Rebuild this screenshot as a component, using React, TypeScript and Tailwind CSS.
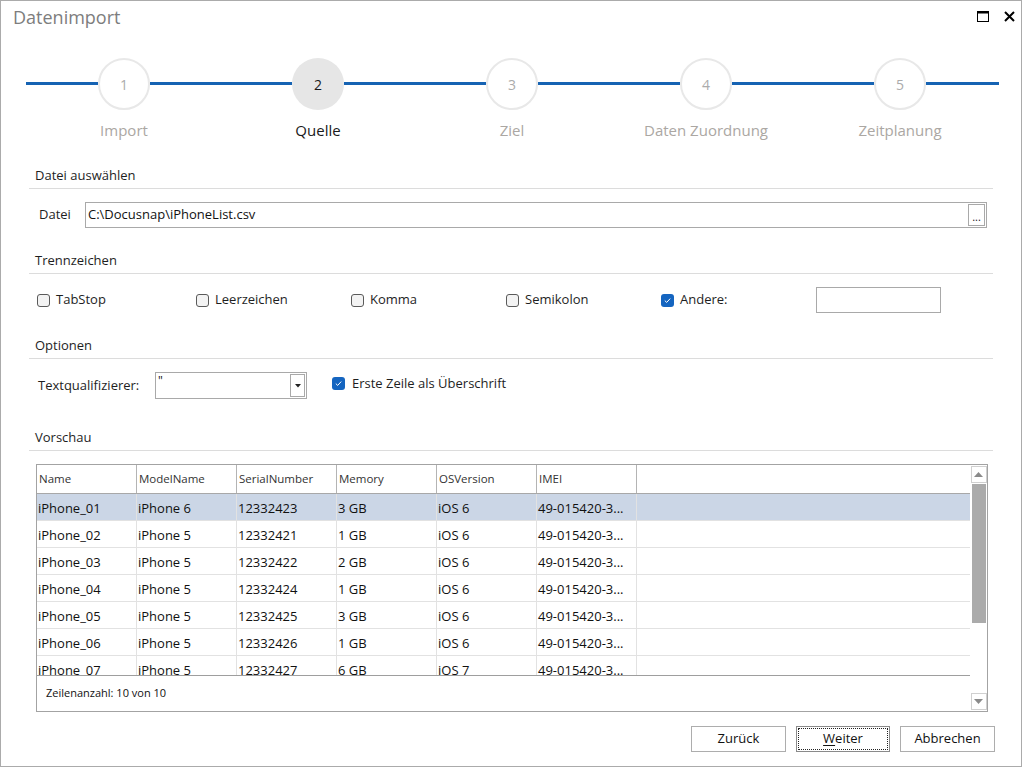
import React from "react";

const STEPS = [
  { n: 1, label: "Import" },
  { n: 2, label: "Quelle", active: true },
  { n: 3, label: "Ziel" },
  { n: 4, label: "Daten Zuordnung" },
  { n: 5, label: "Zeitplanung" },
];

const COLS = ["Name", "ModelName", "SerialNumber", "Memory", "OSVersion", "IMEI"];

const ROWS = [
  ["iPhone_01", "iPhone 6", "12332423", "3 GB", "iOS 6", "49-015420-3..."],
  ["iPhone_02", "iPhone 5", "12332421", "1 GB", "iOS 6", "49-015420-3..."],
  ["iPhone_03", "iPhone 5", "12332422", "2 GB", "iOS 6", "49-015420-3..."],
  ["iPhone_04", "iPhone 5", "12332424", "1 GB", "iOS 6", "49-015420-3..."],
  ["iPhone_05", "iPhone 5", "12332425", "3 GB", "iOS 6", "49-015420-3..."],
  ["iPhone_06", "iPhone 5", "12332426", "1 GB", "iOS 6", "49-015420-3..."],
  ["iPhone_07", "iPhone 5", "12332427", "6 GB", "iOS 7", "49-015420-3..."],
];

function Checkbox({ checked }: { checked?: boolean }) {
  if (checked) {
    return (
      <span className="flex h-[13px] w-[13px] shrink-0 items-center justify-center rounded-[3px] bg-[#1565c0]">
        <svg width="9" height="9" viewBox="0 0 9 9">
          <path d="M1.8 4.6 L3.7 6.4 L7.2 2.6" fill="none" stroke="#ffffff" strokeWidth="1" />
        </svg>
      </span>
    );
  }
  return <span className="h-[13px] w-[13px] shrink-0 rounded-[3px] border border-[#5a5a5a] bg-[#f3f3f3]" />;
}

function SectionHeader({ title }: { title: string }) {
  return (
    <div className="mx-[28px] border-b border-[#dcdcdc] pb-[4px] pl-[6px] text-[13px] leading-[18px] text-[#1e1e1e]">
      {title}
    </div>
  );
}

function Stepper() {
  return (
    <div className="mt-[22px] flex pl-[25px]">
      <div className="mt-[24px] h-[3px] w-[72px] bg-[#1663b3]" />
      {STEPS.map((s, i) => (
        <React.Fragment key={s.n}>
          <div className="flex w-[52px] flex-col items-center">
            <div
              className={
                s.active
                  ? "flex h-[52px] w-[52px] items-center justify-center rounded-full bg-[#e6e6e6] text-[14px] text-[#1a1a1a]"
                  : "flex h-[52px] w-[52px] items-center justify-center rounded-full border-2 border-[#e8e8e8] bg-white text-[14px] text-[#ababab]"
              }
            >
              {s.n}
            </div>
            <div
              className={
                "mt-[10px] whitespace-nowrap text-[15px] leading-[20px] " +
                (s.active ? "text-[#1a1a1a]" : "text-[#aba7a3]")
              }
            >
              {s.label}
            </div>
          </div>
          {i < STEPS.length - 1 ? (
            <div className="mt-[24px] h-[3px] w-[142px] bg-[#1663b3]" />
          ) : (
            <div className="mt-[24px] h-[3px] w-[73px] bg-[#1663b3]" />
          )}
        </React.Fragment>
      ))}
    </div>
  );
}

function Scrollbar() {
  return (
    <div className="flex w-[17px] flex-col items-center pt-[1px] pb-[1px]">
      <div className="flex h-[17px] w-[16px] items-center justify-center border border-[#d0d0d0] bg-white">
        <svg width="9" height="5" viewBox="0 0 9 5">
          <path d="M0 5 L4.5 0 L9 5 Z" fill="#8a8a8a" />
        </svg>
      </div>
      <div className="mt-[1px] h-[139px] w-[14px] bg-[#ababab]" />
      <div className="flex-1" />
      <div className="flex h-[17px] w-[16px] items-center justify-center border border-[#d0d0d0] bg-white">
        <svg width="9" height="5" viewBox="0 0 9 5">
          <path d="M0 0 L4.5 5 L9 0 Z" fill="#8a8a8a" />
        </svg>
      </div>
    </div>
  );
}

function Preview() {
  return (
    <div className="ml-[35px] mr-[33px] mt-[13px] flex h-[248px] border border-[#a3a3a3] bg-white">
      <div className="flex min-w-0 flex-1 flex-col">
        <div className="flex h-[211px] flex-col overflow-hidden border-b border-[#9e9e9e]">
          <div className="flex h-[29px] shrink-0 border-b border-[#a8a8a8]">
            {COLS.map((c) => (
              <div
                key={c}
                className="flex w-[100px] shrink-0 items-center border-r border-[#b4b4b4] pl-[2px] text-[11.5px] text-[#333333]"
              >
                {c}
              </div>
            ))}
          </div>
          {ROWS.map((r, i) => (
            <div
              key={r[0]}
              className={
                "flex h-[27px] shrink-0 border-b border-[#e2e2e2] " + (i === 0 ? "bg-[#cbd6e6]" : "bg-white")
              }
            >
              {r.map((v, j) => (
                <div
                  key={j}
                  className="flex w-[100px] shrink-0 items-center border-r border-[#e2e2e2] pl-[1px] pt-[1px] text-[13px] leading-[18px] text-[#111111]"
                >
                  {v}
                </div>
              ))}
            </div>
          ))}
        </div>
        <div className="flex flex-1 items-center pl-[9px] text-[11px] text-[#111111]">Zeilenanzahl: 10 von 10</div>
      </div>
      <Scrollbar />
    </div>
  );
}

export default function App() {
  const checks = [
    { label: "TabStop", w: "w-[159px]" },
    { label: "Leerzeichen", w: "w-[155px]" },
    { label: "Komma", w: "w-[155px]" },
    { label: "Semikolon", w: "w-[155px]" },
    { label: "Andere:", w: "w-[155px]", checked: true },
  ];

  return (
    <div className="h-[768px] w-[1024px] bg-white font-['Open_Sans',sans-serif]">
      <div className="flex h-[767px] w-[1022px] flex-col border border-[#ababab] bg-white">
        {/* Title bar */}
        <div className="flex h-[35px] shrink-0 items-start">
          <div className="pl-[12px] pt-[3px] text-[18px] leading-[26px] text-[#7d7d7d]">Datenimport</div>
          <div className="flex-1" />
          <div className="flex items-center gap-[15px] pr-[6px] pt-[10px]">
            <svg width="12" height="11" viewBox="0 0 12 11">
              <rect x="0.5" y="0.5" width="11" height="10" fill="none" stroke="#000" strokeWidth="1" />
              <rect x="0" y="0" width="12" height="2.5" fill="#000" />
            </svg>
            <svg width="11" height="11" viewBox="0 0 11 11">
              <path d="M1 1 L10 10 M10 1 L1 10" stroke="#000" strokeWidth="2" />
            </svg>
          </div>
        </div>

        <Stepper />

        {/* Datei auswählen */}
        <div className="mt-[26px]">
          <SectionHeader title="Datei auswählen" />
          <div className="ml-[38px] mr-[34px] mt-[13px] flex items-center">
            <div className="w-[46px] text-[13px] text-[#1e1e1e]">Datei</div>
            <div className="flex h-[26px] flex-1 items-center justify-between border border-[#a9a9a9] pl-[2px] pr-[1px]">
              <span className="text-[13px] text-[#111111]">C:\Docusnap\iPhoneList.csv</span>
              <div className="flex h-[22px] w-[17px] items-end justify-center border border-[#a9a9a9] pb-[3px] text-[11px] leading-[10px] text-[#222222]">
                ...
              </div>
            </div>
          </div>
        </div>

        {/* Trennzeichen */}
        <div className="mt-[23px]">
          <SectionHeader title="Trennzeichen" />
          <div className="ml-[36px] mt-[13px] flex h-[26px] items-center">
            {checks.map((c) => (
              <div key={c.label} className={"flex items-center gap-[6px] " + c.w}>
                <Checkbox checked={c.checked} />
                <span className="text-[13px] text-[#1e1e1e]">{c.label}</span>
              </div>
            ))}
            <div className="h-[26px] w-[125px] border border-[#a9a9a9] bg-white" />
          </div>
        </div>

        {/* Optionen */}
        <div className="mt-[23px]">
          <SectionHeader title="Optionen" />
          <div className="ml-[37px] mt-[13px] flex h-[27px] items-start">
            <div className="mt-[4px] w-[117px] text-[13px] text-[#1e1e1e]">Textqualifizierer:</div>
            <div className="flex h-[27px] w-[152px] items-start justify-between border border-[#a9a9a9] pl-[2px] pr-[1px] pt-[1px]">
              <span className="text-[12px] leading-[14px] text-[#111111]">"</span>
              <div className="flex h-[23px] w-[15px] items-center justify-center border border-[#a9a9a9]">
                <svg width="6" height="4" viewBox="0 0 6 4">
                  <path d="M0 0 L3 3.5 L6 0 Z" fill="#222" />
                </svg>
              </div>
            </div>
            <div className="ml-[25px] mt-[2px] flex items-center gap-[7px]">
              <Checkbox checked />
              <span className="text-[13px] text-[#1e1e1e]">Erste Zeile als Überschrift</span>
            </div>
          </div>
        </div>

        {/* Vorschau */}
        <div className="mt-[29px]">
          <SectionHeader title="Vorschau" />
          <Preview />
        </div>

        {/* Buttons */}
        <div className="mr-[26px] mt-[14px] flex justify-end gap-[10px]">
          <button className="h-[26px] w-[95px] border border-[#adadad] bg-white text-[13px] text-[#111111]">
            Zurück
          </button>
          <button className="h-[26px] w-[94px] border border-[#8a8a8a] bg-white p-[1px] text-[13px] text-[#111111]">
            <span className="flex h-full w-full items-center justify-center border border-dotted border-[#222222]">
              <span className="underline underline-offset-2">W</span>eiter
            </span>
          </button>
          <button className="h-[26px] w-[95px] border border-[#adadad] bg-white text-[13px] text-[#111111]">
            Abbrechen
          </button>
        </div>
      </div>
    </div>
  );
}
